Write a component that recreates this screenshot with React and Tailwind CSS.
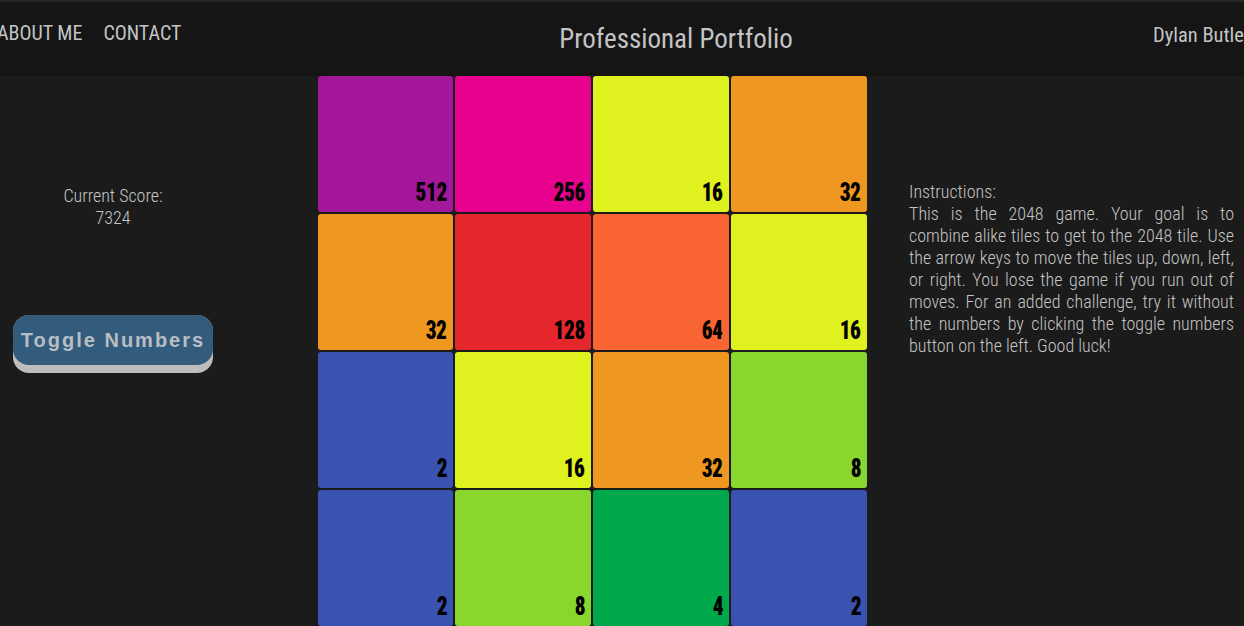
import React from "react";

const tiles = [
  [512, "bg-[#a4169a]"], [256, "bg-[#e8008e]"], [16, "bg-[#dff220]"], [32, "bg-[#ee9822]"],
  [32, "bg-[#ee9822]"], [128, "bg-[#e5262c]"], [64, "bg-[#f86533]"], [16, "bg-[#dff220]"],
  [2, "bg-[#3a52b0]"], [16, "bg-[#dff220]"], [32, "bg-[#ee9822]"], [8, "bg-[#89d62e]"],
  [2, "bg-[#3a52b0]"], [8, "bg-[#89d62e]"], [4, "bg-[#00a84c]"], [2, "bg-[#3a52b0]"],
];

const cond = { fontFamily: '"Roboto Condensed", "Liberation Sans Narrow", Roboto, sans-serif' };

export default function App() {
  return (
    <div className="w-[1244px] h-[626px] overflow-hidden bg-[#1b1b1b] text-[#c4c4c4]" style={cond}>
      <header className="h-[76px] bg-[#151515] border-t-2 border-[#262626] flex items-start relative">
        <nav className="flex gap-[21px] ml-[-3px] mt-[16px] text-[20px]">
          <span>ABOUT ME</span>
          <span>CONTACT</span>
        </nav>
        <div className="absolute left-0 right-0 top-[17px] text-center text-[27px] pl-[108px]">Professional Portfolio</div>
        <div className="absolute left-[1153px] top-[18px] text-[20.5px] whitespace-nowrap">Dylan Butler</div>
      </header>
      <div className="flex">
        <div className="w-[226px] flex flex-col items-center">
          <div className="mt-[109px] text-center text-[18px] font-light leading-[22px]">
            <div>Current Score:</div>
            <div>7324</div>
          </div>
          <button className="mt-[86px] w-[200px] h-[58px] rounded-[16px] bg-[#bdbdbd] p-0 flex items-start">
            <span className="w-full h-[50px] rounded-[16px] bg-[#335b7c] flex items-center justify-center text-[20px] font-bold tracking-[2px] text-[#b8bec4]" style={{ fontFamily: '"Liberation Sans", Arial, sans-serif' }}>
              Toggle Numbers
            </span>
          </button>
        </div>
        <div className="ml-[92px] grid grid-cols-[135px_136px_136px_136px] gap-x-[2px] gap-y-[2px] w-[549px]">
          {tiles.map(([n, c], i) => (
            <div key={i} className={`${c} h-[136px] rounded-[3px] flex items-end justify-end pr-[6px] pb-[7px]`}>
              <span className="text-[25px] leading-none font-black text-black tracking-[-0.5px] scale-x-[0.85] origin-right" style={{ fontFamily: 'Impact, "Roboto Condensed", Roboto, sans-serif' }}>{n}</span>
            </div>
          ))}
        </div>
        <div className="ml-[42px] w-[325px] mt-[105px] text-[18px] font-light leading-[22px] text-justify">
          <div>Instructions:</div>
          <p>This is the 2048 game. Your goal is to combine alike tiles to get to the 2048 tile. Use the arrow keys to move the tiles up, down, left, or right. You lose the game if you run out of moves. For an added challenge, try it without the numbers by clicking the toggle numbers button on the left. Good luck!</p>
        </div>
      </div>
    </div>
  );
}
